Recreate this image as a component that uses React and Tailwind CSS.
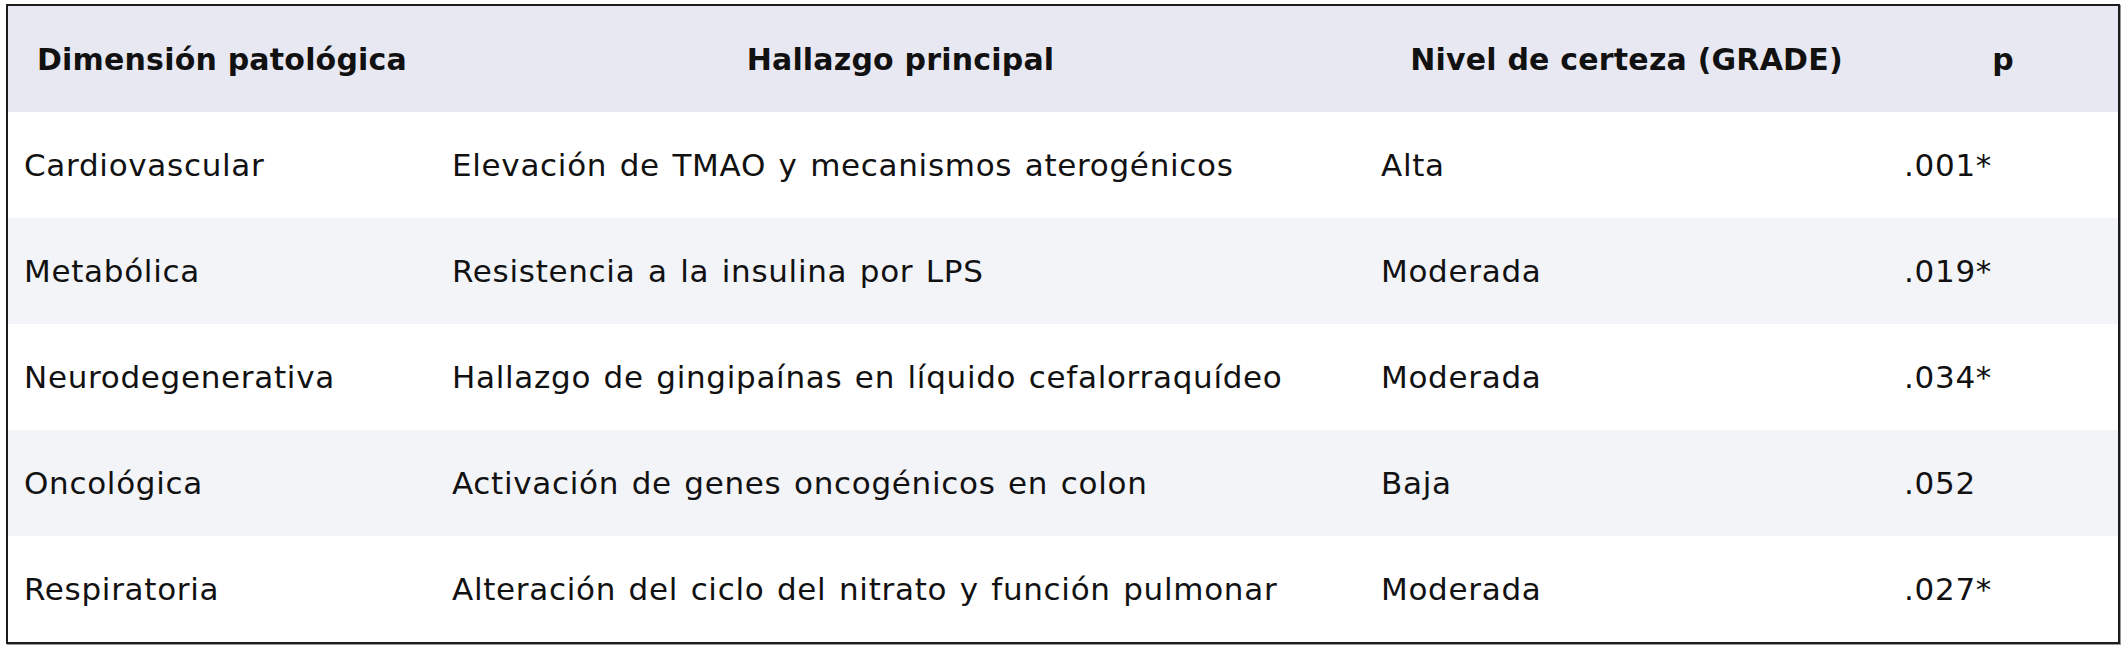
export default function App() {
  const rows = [
    ["Cardiovascular", "Elevación de TMAO y mecanismos aterogénicos", "Alta", ".001*"],
    ["Metabólica", "Resistencia a la insulina por LPS", "Moderada", ".019*"],
    ["Neurodegenerativa", "Hallazgo de gingipaínas en líquido cefalorraquídeo", "Moderada", ".034*"],
    ["Oncológica", "Activación de genes oncogénicos en colon", "Baja", ".052"],
    ["Respiratoria", "Alteración del ciclo del nitrato y función pulmonar", "Moderada", ".027*"],
  ];
  const headers = ["Dimensión patológica", "Hallazgo principal", "Nivel de certeza (GRADE)", "p"];
  return (
    <div className="w-[2128px] h-[648px] bg-white pt-[4px] pl-[6px]" style={{ fontFamily: '"DejaVu Sans", sans-serif' }}>
      <div className="w-[2114px] border-2 border-[#1c1c1c] shadow-[1px_1px_0_#999]">
        <div className="grid grid-cols-[428px_929px_523px_230px] h-[106px] bg-[#e8e8f2]">
          {headers.map((h) => (
            <div key={h} className="flex items-center justify-center font-bold text-[30px] tracking-[0.2px] text-[#111]">
              {h}
            </div>
          ))}
        </div>
        {rows.map((r, i) => (
          <div
            key={r[0]}
            className={`grid grid-cols-[428px_929px_523px_230px] h-[106px] ${i % 2 === 1 ? "bg-[#f3f4f8]" : "bg-white"}`}
          >
            {r.map((c, j) => (
              <div key={j} className="flex items-center px-[16px] text-[31px] tracking-[0.7px] [word-spacing:2px] text-[#111]">
                {c}
              </div>
            ))}
          </div>
        ))}
      </div>
    </div>
  );
}
